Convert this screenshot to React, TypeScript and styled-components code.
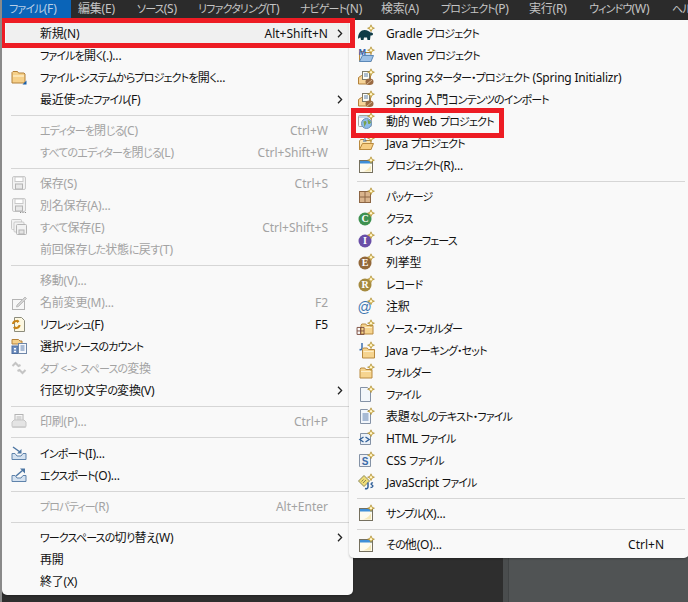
import React from 'react';
import styled, { createGlobalStyle } from 'styled-components';

const GlobalStyle = createGlobalStyle`
  html, body {
    margin: 0;
    padding: 0;
    background: #2e2e2e;
  }
  body {
    font-family: "Noto Sans", "Noto Sans CJK JP", sans-serif;
    font-size: 12px;
    font-feature-settings: "palt";
  }
`;

const Page = styled.div`
  position: relative;
  width: 688px;
  height: 602px;
  overflow: hidden;
  background: linear-gradient(to right, #2e2e2e 501px, #4a4d4e 501px, #4a4d4e 506px, #414445 506px, #414445 507px, #505354 507px);
  border-left: 2px solid #8a8a8a;
  box-sizing: border-box;
`;

const MenuBar = styled.div`
  display: flex;
  height: 20px;
  background: #2b2b2b;
  white-space: nowrap;
`;

const BarItem = styled.div<{ $active?: boolean; $width: number }>`
  flex: none;
  width: ${(p) => p.$width}px;
  height: ${(p) => (p.$active ? 18 : 19)}px;
  padding-left: 7px;
  box-sizing: border-box;
  line-height: 18px;
  letter-spacing: -0.2px;
  background: ${(p) => (p.$active ? '#0a64b8' : 'transparent')};
  color: ${(p) => (p.$active ? '#b9cfe6' : '#c4c4c4')};
`;

const Menus = styled.div`
  display: flex;
  align-items: flex-start;
`;

const Menu = styled.div<{ $width: number; $left?: number }>`
  flex: none;
  position: relative;
  width: ${(p) => p.$width}px;
  margin-left: ${(p) => p.$left ?? 0}px;
  padding: 2px 0 3px;
  box-sizing: border-box;
  background: #f9f9f9;
  border-radius: 0 0 5px 5px;
  box-shadow: 0 1px 2px rgba(0, 0, 0, 0.25);
`;

const Row = styled.div<{ $hover?: boolean }>`
  display: grid;
  grid-template-columns: 16px 1fr auto 10px;
  align-items: center;
  height: 22px;
  margin: 0 ${(p) => (p.$hover ? 5 : 0)}px 0 ${(p) => (p.$hover ? 4 : 0)}px;
  padding: 0 ${(p) => (p.$hover ? 5 : 10)}px 0 ${(p) => (p.$hover ? 5 : 9)}px;
  background: ${(p) => (p.$hover ? '#f0f0f0' : 'transparent')};
  white-space: nowrap;
`;

const IconSlot = styled.span`
  display: block;
  width: 16px;
  height: 16px;
  svg {
    display: block;
    overflow: visible;
  }
`;

const Label = styled.span<{ $disabled?: boolean; $right?: boolean }>`
  padding: 2px 0 0 ${(p) => (p.$right ? 12 : 13)}px;
  color: ${(p) => (p.$disabled ? '#a3a3a3' : '#111')};
  line-height: 20px;
  letter-spacing: -0.2px;
`;

const Kana = styled.span`
  font-size: 11px;
  letter-spacing: -0.85px;
`;

const Shortcut = styled.span<{ $disabled?: boolean }>`
  padding: 2px 5px 0 0;
  line-height: 20px;
  color: ${(p) => (p.$disabled ? '#a3a3a3' : '#111')};
`;

const Arrow = styled.span`
  display: flex;
  justify-content: flex-end;
  svg {
    display: block;
  }
`;

const Separator = styled.div<{ $tall?: boolean; $right?: boolean }>`
  height: 1px;
  margin: 5px 4px ${(p) => (p.$tall ? 4 : 3)}px ${(p) => (p.$right ? 8 : 9)}px;
  background: #d6d6d6;
`;

const RedBox = styled.div<{ $x: number; $y: number; $w: number; $h: number }>`
  position: absolute;
  left: ${(p) => p.$x}px;
  top: ${(p) => p.$y}px;
  width: ${(p) => p.$w}px;
  height: ${(p) => p.$h}px;
  box-sizing: border-box;
  border: 5px solid #ed1c24;
`;

const GL = '#c9c9c9';
const GD = '#b4b4b4';

const Sparkle = () => (
  <g>
    <path
      d="M13 -.2l1 2.400 2.400 1-2.400 1-1 2.400-1-2.400-2.400-1 2.400-1z"
      fill="#f7d96f"
      stroke="#a98a35"
      strokeWidth="0.7"
    />
    <circle cx="13" cy="3.200" r="1" fill="#fffbe0" />
  </g>
);

const Folder = ({ x = 0, y = 0 }: { x?: number; y?: number }) => (
  <g transform={`translate(${x} ${y})`}>
    <path d="M1.500 4.500l.8-1.500h4l1 1.500h6.200v8.500H1.500z" fill="#f6d48f" stroke="#b98a3e" />
    <path d="M2.500 6.500h10" stroke="#fdeec8" />
  </g>
);

const OpenFolder = ({ blue }: { blue?: boolean }) => (
  <g>
    <path d="M1.500 14.500V6l1-1.500h3.500l1 1h6v9z" fill={blue ? '#cfe0f2' : '#fbe3ae'} stroke="#b98a3e" />
    <path d="M1.500 14.500l3-6h11l-2.500 6z" fill={blue ? '#9cc0e6' : '#f6cd82'} stroke={blue ? '#5b88b8' : '#b98a3e'} />
  </g>
);

const Window = () => (
  <g>
    <rect x="1.500" y="3.500" width="13" height="12" fill="#fdfbf0" stroke="#75705f" />
    <rect x="2" y="4" width="12" height="2.500" fill="#3f8fd8" />
    <path d="M3 14.500c4 0 7-2 10-6v6z" fill="#f6e9b8" />
  </g>
);

const Sheet = () => <path d="M2.500 1.500h7l3 3v11h-10z" fill="#f2f6fb" stroke="#8492a6" />;

const Ball = ({ fill, letter }: { fill: string; letter: string }) => (
  <g>
    <circle cx="7" cy="9" r="6.500" fill={fill} />
    <text x="7" y="12.300" textAnchor="middle" fontSize="10" fontWeight="700" fontFamily="Liberation Serif, serif" fill="#fff">
      {letter}
    </text>
  </g>
);

const Crate = ({ x = 0, y = 0 }: { x?: number; y?: number }) => (
  <g transform={`translate(${x} ${y})`}>
    <rect x="1.500" y="3.500" width="11" height="11" fill="#d9b48c" stroke="#8d6644" />
    <path d="M7 3.500v11M1.500 9h11" stroke="#8d6644" />
  </g>
);

const Floppy = ({ extra }: { extra?: boolean }) => (
  <g>
    <rect x="1.500" y="1.500" width="13" height="13" rx="1.500" fill="#f2f2f2" stroke={GL} />
    <rect x="4" y="2" width="8" height="4.500" fill="#fff" stroke={GL} />
    <rect x="4.500" y="9" width="7" height="5" fill="#e8e8e8" stroke={GD} />
    {extra && <path d="M9 15.500h1.200M11.400 15.500h1.200M13.800 15.500h1.200" stroke="#8f8f8f" />}
  </g>
);

const icons: Record<string, React.ReactNode> = {
  openFolder: (
    <g>
      <path d="M1 14V3.500l1-1h4.500l1 1.500h5.500l1 1V14z" fill="#f6d089" stroke="#b3813a" />
      <path d="M2 7h11" stroke="#fdecc4" strokeWidth="1.500" />
      <path d="M15.500 11.500v4h-4z" fill="#1a5fa8" />
    </g>
  ),
  save: <Floppy />,
  saveAs: <Floppy extra />,
  saveAll: (
    <g>
      <rect x="0.500" y="0.500" width="10" height="10" rx="1" fill="#f2f2f2" stroke={GL} />
      <rect x="3" y="3" width="10" height="10" rx="1" fill="#f2f2f2" stroke={GL} />
      <rect x="5.500" y="5.500" width="10" height="10" rx="1" fill="#f2f2f2" stroke={GD} />
      <rect x="8" y="11" width="5" height="4" fill="#e4e4e4" stroke={GD} />
    </g>
  ),
  rename: (
    <g>
      <rect x="1.500" y="5.500" width="12" height="10" fill="#f7f7f7" stroke={GD} />
      <path d="M6 11l8-8 1.500 1.500-8 8-2 .5z" fill="#d4d4d4" stroke="#bdbdbd" />
    </g>
  ),
  refresh: (
    <g>
      <path d="M3.500 1.500h7l3 3v11h-10z" fill="#fdf8e2" stroke="#8c8c7c" />
      <path d="M2 8c0-3 4-3.500 5.500-2.500M8.500 9c0 3-4 3.500-5.500 2.500" fill="none" stroke="#c98418" strokeWidth="2" />
      <path d="M6 3.500l2.500 2-2.500 1.500zM4.500 13.500l-2.500-2 2.500-1.500z" fill="#c98418" />
    </g>
  ),
  count: (
    <g>
      <path d="M1 6V1.500h6.500L9 3h2v3z" fill="#f6d089" stroke="#b3813a" />
      <rect x="1" y="8" width="6" height="7.500" fill="#6f8fc0" stroke="#4f6f9f" />
      <path d="M3 10h2v1.500H3zM3 12.800h2v1.500H3z" fill="#fff" />
      <rect x="7.500" y="5.500" width="8" height="10" fill="#f7f9fd" stroke="#6f87a8" />
      <path d="M9.500 8h4M9.500 10h4M9.500 12h4" stroke="#5d7fae" />
    </g>
  ),
  tab: (
    <g fill="none" stroke="#c4c4c4" strokeWidth="2">
      <path d="M1.500 6l3-3 3 3 2-1" />
      <path d="M14.500 10l-3 3-3-3-2 1" />
    </g>
  ),
  print: (
    <g>
      <rect x="4" y="1.500" width="8" height="7" fill="#f8f8f8" stroke={GD} />
      <path d="M5.500 4h5M5.500 6h5" stroke={GD} />
      <path d="M1 9l2-2h10l2 2v4.500H1z" fill="#e4e4e4" stroke="#c6c6c6" />
      <rect x="1" y="13" width="14" height="2" rx="1" fill="#cfcfcf" />
    </g>
  ),
  import: (
    <g>
      <path d="M1 8.500v6h14v-6h-3l-2 2.500H6L4 8.500z" fill="#d5e2f0" stroke="#5f83ab" />
      <path d="M2 2l7 5" stroke="#4d76a3" strokeWidth="1.500" />
      <path d="M10.500 4v4.500H6z" fill="#4d76a3" />
    </g>
  ),
  export: (
    <g>
      <path d="M1 8.500v6h14v-6h-3l-2 2.500H6L4 8.500z" fill="#d5e2f0" stroke="#5f83ab" />
      <path d="M5 9l7-6" stroke="#4d76a3" strokeWidth="1.500" />
      <path d="M9 1.500h5v5z" fill="#4d76a3" />
    </g>
  ),
  gradle: (
    <g>
      <path d="M0 14c0-6 3-9 6.500-9 3 0 5 1.500 6 2.500 1.500 0 2.500.5 2.500 1.500 0 1-1 1.500-2.500 1.500L12 15H9.500L9 12.500H6L5.500 15H3L2.500 12.500c-.8 0-1.500.5-2.500 1.500z" fill="#0f3b47" />
      <Sparkle />
    </g>
  ),
  maven: (
    <g>
      <OpenFolder blue />
      <text x="0.500" y="8" fontSize="9" fontWeight="700" fontFamily="Liberation Sans, sans-serif" fill="#3a5fa8">M</text>
      <Sparkle />
    </g>
  ),
  spring: (
    <g>
      <path d="M0.500 15V8.500l3-2h9V15z" fill="#f6d498" stroke="#b3813a" />
      <rect x="4.500" y="2.500" width="7" height="8" fill="#fdfdf6" stroke="#7d7a6a" />
      <path d="M6 5h4M6 7h4" stroke="#5c7fa8" />
      <ellipse cx="11.500" cy="12.800" rx="4" ry="3.200" fill="#9a6a42" />
      <path d="M9 15l5-4" stroke="#d7b58e" />
      <Sparkle />
    </g>
  ),
  web: (
    <g>
      <rect x="0.500" y="2.500" width="13" height="11" rx="1" fill="#f7f8fb" stroke="#a5a59c" />
      <rect x="1" y="3" width="12" height="2" fill="#c3d6ec" />
      <circle cx="8.500" cy="10.500" r="5" fill="#8cbbe8" stroke="#6d93b8" />
      <path d="M5.500 8.500c1.500-1 3-.5 3 1S6.500 12 6.500 14.500M9.500 6.500c1 1 3 1 3.500 3-1 1.500-1.800 1.800-2.800 1.300z" fill="#7aa24a" />
      <Sparkle />
    </g>
  ),
  java: (
    <g>
      <OpenFolder />
      <path d="M7 2.500c-.5 1 .5 1.500 0 2.500M5 6h3.500" stroke="#3d6fae" fill="none" />
      <Sparkle />
    </g>
  ),
  project: (
    <g>
      <Window />
      <Sparkle />
    </g>
  ),
  package: (
    <g>
      <Crate />
      <Sparkle />
    </g>
  ),
  class: (
    <g>
      <Ball fill="#3f9150" letter="C" />
      <Sparkle />
    </g>
  ),
  interface: (
    <g>
      <Ball fill="#6a4fa8" letter="I" />
      <Sparkle />
    </g>
  ),
  enum: (
    <g>
      <Ball fill="#93683a" letter="E" />
      <Sparkle />
    </g>
  ),
  record: (
    <g>
      <Ball fill="#a58a3e" letter="R" />
      <Sparkle />
    </g>
  ),
  annotation: (
    <g>
      <text x="6.500" y="13.500" textAnchor="middle" fontSize="14" fontFamily="Liberation Sans, sans-serif" fill="#3c76b0">@</text>
      <Sparkle />
    </g>
  ),
  sourceFolder: (
    <g>
      <Folder x={1.500} y={1} />
      <g transform="translate(-2 5) scale(0.7)">
        <path d="M1.500 3.500h10v10h-10zM6.500 3.500v10M1.500 8.500h10" fill="none" stroke="#7a4a3a" strokeWidth="1.300" />
      </g>
      <Sparkle />
    </g>
  ),
  workingSet: (
    <g>
      <path d="M4 1v5c0 1.500-1 2-2.500 1.500" fill="none" stroke="#3d6fae" strokeWidth="1.500" />
      <Folder x={3} y={3} />
      <Sparkle />
    </g>
  ),
  folder: (
    <g>
      <Folder x={0.500} y={1} />
      <Sparkle />
    </g>
  ),
  file: (
    <g>
      <Sheet />
      <Sparkle />
    </g>
  ),
  textFile: (
    <g>
      <Sheet />
      <path d="M4.500 6h6M4.500 8h6M4.500 10h6M4.500 12h6" stroke="#5d7fae" />
      <Sparkle />
    </g>
  ),
  html: (
    <g>
      <path d="M2.500 3.500h8l2 2v9h-10z" fill="#eaf0f7" stroke="#8492a6" />
      <path d="M5.500 7L1.800 9.500l3.700 2.500M7.500 7l3.700 2.500L7.500 12" fill="none" stroke="#2f5f98" strokeWidth="1.300" />
      <Sparkle />
    </g>
  ),
  css: (
    <g>
      <path d="M1.500 2.500h9l2 2v10h-11z" fill="#eef1f5" stroke="#8492a6" />
      <text x="7" y="12.500" textAnchor="middle" fontSize="10" fontWeight="700" fontFamily="Liberation Sans, sans-serif" fill="#3a6aa8">S</text>
      <Sparkle />
    </g>
  ),
  js: (
    <g>
      <path d="M0.500 7L6 1.500 11.500 7 6 12.500z" fill="#eedc78" stroke="#8e8a58" />
      <path d="M3.500 7.500l2-2M5 9l3-3" stroke="#8e8a58" />
      <path d="M10 8.500v4.500c0 1.500-1.500 2-3 1.500" fill="none" stroke="#2f5f98" strokeWidth="1.500" />
      <path d="M15 9c-2-.5-2.500 1.500-1 2s1 2.500-1.500 2.500" fill="none" stroke="#2f5f98" strokeWidth="1.300" />
      <Sparkle />
    </g>
  ),
};

const Icon = ({ name }: { name?: string }) => (
  <IconSlot>
    {name && (
      <svg width="16" height="16" viewBox="0 0 16 16">
        {icons[name]}
      </svg>
    )}
  </IconSlot>
);

const Chevron = () => (
  <svg width="6" height="9" viewBox="0 0 6 9">
    <path d="M1 .8l3.600 3.700L1 8.200" fill="none" stroke="#222" strokeWidth="1.300" />
  </svg>
);

// kana in the reference font runs much narrower than kanji, so it gets its own span
const Text = ({ value }: { value: string }) => (
  <>
    {value.split(/([\u3040-\u30ff]+)/).map((part, i) =>
      i % 2 ? <Kana key={i}>{part}</Kana> : part,
    )}
  </>
);

type Item = {
  label?: string;
  icon?: string;
  keys?: string;
  sub?: boolean;
  off?: boolean;
  hover?: boolean;
  sep?: boolean;
  tall?: boolean;
};

const fileItems: Item[] = [
  { label: '新規(N)', keys: 'Alt+Shift+N', sub: true, hover: true },
  { label: 'ファイルを開く(.)...' },
  { label: 'ファイル・システムからプロジェクトを開く...', icon: 'openFolder' },
  { label: '最近使ったファイル(F)', sub: true },
  { sep: true },
  { label: 'エディターを閉じる(C)', keys: 'Ctrl+W', off: true },
  { label: 'すべてのエディターを閉じる(L)', keys: 'Ctrl+Shift+W', off: true },
  { sep: true },
  { label: '保存(S)', keys: 'Ctrl+S', off: true, icon: 'save' },
  { label: '別名保存(A)...', off: true, icon: 'saveAs' },
  { label: 'すべて保存(E)', keys: 'Ctrl+Shift+S', off: true, icon: 'saveAll' },
  { label: '前回保存した状態に戻す(T)', off: true },
  { sep: true },
  { label: '移動(V)...', off: true },
  { label: '名前変更(M)...', keys: 'F2', off: true, icon: 'rename' },
  { label: 'リフレッシュ(F)', keys: 'F5', icon: 'refresh' },
  { label: '選択リソースのカウント', icon: 'count' },
  { label: 'タブ <-> スペースの変換', off: true, icon: 'tab' },
  { label: '行区切り文字の変換(V)', sub: true },
  { sep: true },
  { label: '印刷(P)...', keys: 'Ctrl+P', off: true, icon: 'print' },
  { sep: true, tall: true },
  { label: 'インポート(I)...', icon: 'import' },
  { label: 'エクスポート(O)...', icon: 'export' },
  { sep: true },
  { label: 'プロパティー(R)', keys: 'Alt+Enter', off: true },
  { sep: true },
  { label: 'ワークスペースの切り替え(W)', sub: true },
  { label: '再開' },
  { label: '終了(X)' },
];

const newItems: Item[] = [
  { label: 'Gradle プロジェクト', icon: 'gradle' },
  { label: 'Maven プロジェクト', icon: 'maven' },
  { label: 'Spring スターター・プロジェクト (Spring Initializr)', icon: 'spring' },
  { label: 'Spring 入門コンテンツのインポート', icon: 'spring' },
  { label: '動的 Web プロジェクト', icon: 'web' },
  { label: 'Java プロジェクト', icon: 'java' },
  { label: 'プロジェクト(R)...', icon: 'project' },
  { sep: true },
  { label: 'パッケージ', icon: 'package' },
  { label: 'クラス', icon: 'class' },
  { label: 'インターフェース', icon: 'interface' },
  { label: '列挙型', icon: 'enum' },
  { label: 'レコード', icon: 'record' },
  { label: '注釈', icon: 'annotation' },
  { label: 'ソース・フォルダー', icon: 'sourceFolder' },
  { label: 'Java ワーキング・セット', icon: 'workingSet' },
  { label: 'フォルダー', icon: 'folder' },
  { label: 'ファイル', icon: 'file' },
  { label: '表題なしのテキスト・ファイル', icon: 'textFile' },
  { label: 'HTML ファイル', icon: 'html' },
  { label: 'CSS ファイル', icon: 'css' },
  { label: 'JavaScript ファイル', icon: 'js' },
  { sep: true },
  { label: 'サンプル(X)...', icon: 'project' },
  { sep: true },
  { label: 'その他(O)...', keys: 'Ctrl+N', icon: 'project' },
];

const barItems: [string, number][] = [
  ['ファイル(F)', 69],
  ['編集(E)', 59],
  ['ソース(S)', 61],
  ['リファクタリング(T)', 102],
  ['ナビゲート(N)', 81],
  ['検索(A)', 60],
  ['プロジェクト(P)', 88],
  ['実行(R)', 60],
  ['ウィンドウ(W)', 83],
  ['ヘルプ(H)', 60],
];

function MenuRows({ items, right }: { items: Item[]; right?: boolean }) {
  return (
    <>
      {items.map((item, i) =>
        item.sep ? (
          <Separator key={i} $tall={item.tall} $right={right} />
        ) : (
          <Row key={i} $hover={item.hover}>
            <Icon name={item.icon} />
            <Label $disabled={item.off} $right={right}>
              <Text value={item.label ?? ''} />
            </Label>
            <Shortcut $disabled={item.off}>{item.keys}</Shortcut>
            <Arrow>{item.sub && <Chevron />}</Arrow>
          </Row>
        ),
      )}
    </>
  );
}

export default function App() {
  return (
    <Page>
      <GlobalStyle />
      <MenuBar>
        {barItems.map(([label, width], i) => (
          <BarItem key={label} $active={i === 0} $width={width}>
            <Text value={label} />
          </BarItem>
        ))}
      </MenuBar>
      <Menus>
        <Menu $width={351}>
          <MenuRows items={fileItems} />
        </Menu>
        <Menu $width={340} $left={-4}>
          <MenuRows items={newItems} right />
        </Menu>
      </Menus>
      <RedBox $x={-2} $y={18} $w={355} $h={30} />
      <RedBox $x={349} $y={108} $w={153} $h={30} />
    </Page>
  );
}
